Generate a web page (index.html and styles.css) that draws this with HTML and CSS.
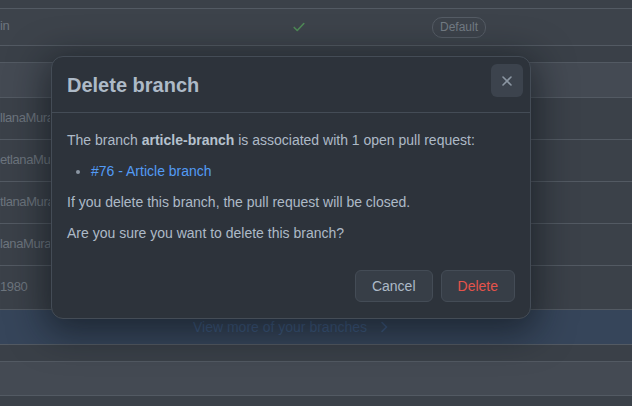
FILE: index.html
```html
<!DOCTYPE html>
<html lang="en">
<head>
<meta charset="utf-8">
<title>Delete branch</title>
<link rel="stylesheet" href="styles.css">
</head>
<body>
<div class="page">
  <div class="row r-top"></div>
  <div class="row r-main">
    <span class="cell name">in</span>
    <span class="cell check">
      <svg width="14" height="14" viewBox="0 0 16 16"><path d="M2.5 8.5l3.5 3.5 7.5-8" fill="none" stroke="currentColor" stroke-width="1.8" stroke-linecap="round" stroke-linejoin="round"/></svg>
    </span>
    <span class="cell badge">Default</span>
  </div>
  <div class="row r-gap"></div>
  <div class="row r-head"></div>
  <div class="row r-item"><span class="cell name">llanaMura</span></div>
  <div class="row r-item"><span class="cell name">etlanaMur</span></div>
  <div class="row r-item"><span class="cell name">tlanaMura</span></div>
  <div class="row r-item"><span class="cell name">lanaMurav</span></div>
  <div class="row r-item r-last"><span class="cell name">1980</span></div>
  <div class="row r-more">
    <span class="more-text">View more of your branches</span>
    <svg class="chev" width="10" height="12" viewBox="0 0 10 12"><path d="M3 1.5l4.5 4.5-4.5 4.5" fill="none" stroke="currentColor" stroke-width="1.6" stroke-linecap="round" stroke-linejoin="round"/></svg>
  </div>
  <div class="row r-gap"></div>
  <div class="row r-head r-foot"></div>
  <div class="row r-end"></div>
</div>

<div class="modal" role="dialog">
  <div class="modal-header">
    <h2 class="modal-title">Delete branch</h2>
    <button class="close-btn" aria-label="Close">
      <svg width="12" height="12" viewBox="0 0 12 12"><path d="M2 2l8 8M10 2l-8 8" stroke="currentColor" stroke-width="1.6" stroke-linecap="round"/></svg>
    </button>
  </div>
  <div class="modal-body">
    <p>The branch <strong>article-branch</strong> is associated with 1 open pull request:</p>
    <ul class="pr-list">
      <li><a href="#">#76 - Article branch</a></li>
    </ul>
    <p>If you delete this branch, the pull request will be closed.</p>
    <p class="last">Are you sure you want to delete this branch?</p>
  </div>
  <div class="modal-footer">
    <button class="btn">Cancel</button>
    <button class="btn btn-danger">Delete</button>
  </div>
</div>
</body>
</html>
```
FILE: styles.css
```css
* { box-sizing: border-box; }
html, body { margin: 0; padding: 0; }
body {
  width: 632px;
  height: 406px;
  overflow: hidden;
  background: #3b4149;
  font-family: "Liberation Sans", Arial, sans-serif;
}
.page {
  display: flex;
  flex-direction: column;
  font-family: "Liberation Sans", sans-serif;
  font-size: 13px;
  color: #6d757e;
}
.row {
  display: flex;
  align-items: center;
  border-bottom: 1px solid #535a63;
  flex: none;
}
.r-top { height: 9px; }
.r-main { height: 37px; background: #3d434b; }
.r-gap { height: 17px; background: #3a4048; }
.r-head { height: 35px; background: #444a53; }
.r-item { height: 42px; background: #3b4149; }
.r-last { height: 44px; }
.r-more {
  height: 35px;
  background: #36455a;
  justify-content: center;
  gap: 12px;
  color: #3e5a80;
  font-size: 14px;
  padding-right: 50px;
}
.r-foot { height: 34px; }
.r-end { height: 12px; border-bottom: none; }
.cell.name {
  width: 50px;
  white-space: nowrap;
  overflow: hidden;
  padding-bottom: 3px;
  letter-spacing: -0.4px;
  flex: none;
}
.check {
  color: #4f8a57;
  width: 14px;
  margin-left: 242px;
  display: flex;
  flex: none;
}
.badge {
  margin-left: 126px;
  height: 21px;
  padding: 0 7px;
  border: 1px solid #555c65;
  border-radius: 10px;
  line-height: 19px;
  font-size: 12px;
  color: #737b84;
  flex: none;
}
.chev { color: #3e5a80; }

.modal {
  position: absolute;
  left: 51px;
  top: 56px;
  width: 480px;
  height: 263px;
  background: #2d333b;
  border: 1px solid #444c56;
  border-radius: 12px;
  box-shadow: 0 8px 36px 6px rgba(10, 14, 20, 0.55);
  color: #adbac7;
  font-size: 14px;
  display: flex;
  flex-direction: column;
}
.modal-header {
  display: flex;
  justify-content: space-between;
  align-items: flex-start;
  padding: 7px 7px 15px 15px;
  border-bottom: 1px solid #444c56;
}
.modal-title {
  margin: 9px 0 0;
  font-size: 20px;
  line-height: 24px;
  font-weight: 700;
  color: #adbac7;
}
.close-btn {
  width: 32px;
  height: 33px;
  border: none;
  border-radius: 6px;
  background: #3c434d;
  color: #8b96a2;
  display: flex;
  align-items: center;
  justify-content: center;
  padding: 0;
}
.modal-body {
  padding: 17px 15px 9px;
  line-height: 21px;
}
.modal-body p { margin: 0 0 10px; }
.modal-body p.last { margin: 0; }
.modal-body strong { font-weight: 700; color: #b6c2ce; }
.pr-list {
  margin: 0 0 10px;
  padding-left: 24px;
}
.pr-list li::marker { color: #8b96a2; }
.pr-list a { color: #539bf5; text-decoration: none; }
.modal-footer {
  display: flex;
  justify-content: flex-end;
  gap: 8px;
  padding: 16px 15px;
  margin-top: auto;
}
.btn {
  height: 32px;
  padding: 0 16px;
  border: 1px solid #444c56;
  border-radius: 6px;
  background: #373e47;
  color: #adbac7;
  font-family: "Liberation Sans", Arial, sans-serif;
  font-size: 14px;
}
.btn-danger { color: #e5534b; }
```
